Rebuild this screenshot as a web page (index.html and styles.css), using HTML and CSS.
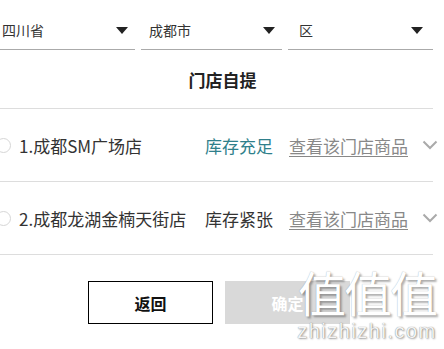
FILE: index.html
```html
<!DOCTYPE html>
<html lang="zh-CN">
<head>
  <meta charset="UTF-8" />
  <meta name="viewport" content="width=device-width, initial-scale=1.0" />
  <title>门店自提</title>
  <link rel="stylesheet" href="styles.css">
</head>
<body>
  <div class="page">
    <div class="regions">
      <div class="pick"><span>四川省</span><svg class="tri" viewBox="0 0 12 7"><polygon points="0,0 12,0 6,7" /></svg></div>
      <div class="pick"><span>成都市</span><svg class="tri" viewBox="0 0 12 7"><polygon points="0,0 12,0 6,7" /></svg></div>
      <div class="pick pick-last"><span>区</span><svg class="tri" viewBox="0 0 12 7"><polygon points="0,0 12,0 6,7" /></svg></div>
    </div>

    <h2 class="title">门店自提</h2>

    <ul class="stores">
      <li class="store">
        <span class="radio"></span>
        <span class="name">1.成都SM广场店</span>
        <span class="stock stock-ok">库存充足</span>
        <a class="goods" href="#">查看该门店商品</a>
        <svg class="chev" viewBox="0 0 16 10"><polyline points="1.5,1.5 8,8 14.5,1.5" /></svg>
      </li>
      <li class="store">
        <span class="radio"></span>
        <span class="name">2.成都龙湖金楠天街店</span>
        <span class="stock">库存紧张</span>
        <a class="goods" href="#">查看该门店商品</a>
        <svg class="chev" viewBox="0 0 16 10"><polyline points="1.5,1.5 8,8 14.5,1.5" /></svg>
      </li>
    </ul>

    <div class="actions">
      <button class="btn btn-back">返回</button>
      <button class="btn btn-ok">确定</button>
    </div>
  </div>

  <div class="watermark">
    <div class="wm-big">值值值</div>
    <div class="wm-small">zhizhizhi.com</div>
  </div>
</body>
</html>
```

FILE: styles.css
```css
body {
  margin: 0;
  font-family: "Noto Sans CJK SC", "Noto Sans", sans-serif;
  background: #fff;
  color: #333;
  overflow: hidden;
  position: relative;
  width: 444px;
  height: 349px;
}
.page {
  margin-left: -6px;
  width: 439px;
}
.regions {
  display: grid;
  grid-template-columns: 141px 141px 145px;
  gap: 6px;
}
.pick {
  height: 50px;
  box-sizing: border-box;
  border-bottom: 1px solid #aaa;
  display: flex;
  align-items: center;
  justify-content: space-between;
  padding: 11px 7px 0 8px;
  font-size: 14px;
  color: #333;
}
.pick-last {
  padding-left: 11px;
  padding-right: 10px;
}
.tri {
  width: 12px;
  height: 7px;
  fill: #222;
}
.title {
  margin: 0;
  height: 58px;
  line-height: 60px;
  text-align: center;
  font-size: 17px;
  font-weight: bold;
  color: #222;
  padding-left: 18px;
}
.stores {
  list-style: none;
  margin: 0;
  padding: 0;
}
.store {
  height: 72px;
  border-top: 1px solid #ddd;
  display: flex;
  align-items: center;
  padding-left: 2px;
}
.store:last-child {
  border-bottom: 1px solid #ddd;
}
.radio {
  width: 13px;
  height: 13px;
  border: 1.5px solid #d6d6d6;
  border-radius: 50%;
  margin-right: 8px;
  flex: none;
}
.name {
  flex: 1;
  font-size: 17px;
  color: #333;
}
.stock {
  width: 84px;
  font-size: 17px;
  color: #333;
}
.stock-ok {
  color: #2f7f8b;
}
.goods {
  font-size: 17px;
  color: #888;
  text-decoration: underline;
  text-underline-offset: 3px;
}
.chev {
  width: 16px;
  height: 10px;
  margin-left: 14px;
  margin-right: -5px;
  fill: none;
  stroke: #aaa;
  stroke-width: 2;
}
.actions {
  display: flex;
  justify-content: center;
  gap: 12px;
  padding-left: 11px;
  margin-top: 26px;
}
.btn {
  width: 125px;
  height: 43px;
  font-family: inherit;
  font-size: 16px;
  font-weight: bold;
  border-radius: 0;
}
.btn-back {
  background: #fff;
  border: 1px solid #000;
  color: #111;
}
.btn-ok {
  background: #d9d9d9;
  border: none;
  color: #fff;
}
.watermark {
  position: absolute;
  left: 294px;
  top: 262px;
  width: 146px;
  text-align: center;
  color: #fff;
  white-space: nowrap;
  pointer-events: none;
}
.wm-big {
  font-size: 48px;
  line-height: 58px;
  letter-spacing: -2px;
  text-shadow: 0 0 1px rgba(0, 0, 0, 0.35), 2px 2px 2px rgba(0, 0, 0, 0.3);
}
.wm-small {
  font-family: "Liberation Sans", sans-serif;
  font-size: 20px;
  line-height: 22px;
  letter-spacing: 1.5px;
  color: #f4f4f4;
  text-shadow: 0 0 1px rgba(0, 0, 0, 0.5), 1px 1px 2px rgba(0, 0, 0, 0.35);
}
```
